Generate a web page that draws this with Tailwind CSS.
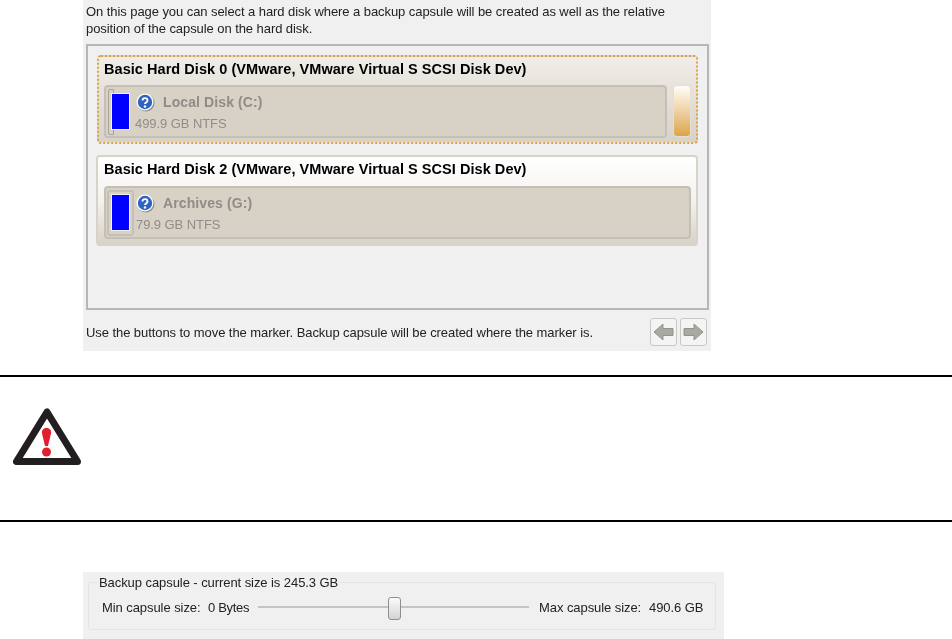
<!DOCTYPE html>
<html lang="en">
<head>
    <meta charset="UTF-8">
    <title>Backup capsule</title>
    <script src="https://cdn.jsdelivr.net/npm/@tailwindcss/browser@4"></script>
</head>
<body class="bg-white w-[952px] h-[639px] overflow-hidden font-['Liberation_Sans',sans-serif]">

    <!-- Disk selection screenshot -->
    <section class="ml-[83px] w-[628px] h-[351px] bg-[#f0f0f0] pl-[3px] pr-[2px] blur-[0.5px] text-[#222] text-[13px] tracking-[-0.07px]">
        <p class="h-[44px] pt-[3px] leading-[17px]">On this page you can select a hard disk where a backup capsule will be created as well as the relative<br>position of the capsule on the hard disk.</p>

        <div class="h-[266px] border-2 border-[#b4b6bc] pl-[9px] pr-[9px] pt-[9px]">
            <!-- Disk 0, selected -->
            <div class="h-[89px] w-[601px] rounded-[4px] border-2 border-dotted border-[#d9a34a] bg-gradient-to-b from-[#f0ede8] to-[#d8d2c7] pt-[4px] pl-[5px] pr-[5px]">
                <h3 class="h-[24px] font-bold text-[14.5px] leading-[16px] text-black tracking-[0.05px]">Basic Hard Disk 0 (VMware, VMware Virtual S SCSI Disk Dev)</h3>
                <div class="flex gap-[6px]">
                    <div class="relative w-[563px] h-[53px] rounded-[4px] border-2 border-[#c4c0b7] bg-[#d7d1c6] flex items-center pl-[5px]">
                        <div class="absolute left-[2px] top-[2px] w-[6px] h-[46px] border border-[#a8a49b] rounded-l-[2px]"></div>
                        <div class="relative w-[19px] h-[37px] bg-[#0000ff] border border-[#f0f0f0]"></div>
                        <div class="ml-[6px]">
                            <div class="flex items-center gap-[8px] h-[22px]">
                                <svg class="w-[19px] h-[19px]" viewBox="0 0 19 19">
                                    <circle cx="10" cy="10" r="8.500" fill="#8d8a84"/>
                                    <circle cx="9" cy="9" r="8.500" fill="#fff"/>
                                    <circle cx="9" cy="9" r="7.200" fill="#2f63c0"/>
                                    <path d="M6.500 7.500c0-3.200 5-3.200 5 0 0 2-2.500 2-2.500 3.500" fill="none" stroke="#fff" stroke-width="1.900"/>
                                    <circle cx="9" cy="13.500" r="1.200" fill="#fff"/>
                                </svg>
                                <span class="text-[14px] font-bold text-[#8f8d88] tracking-[0.1px]">Local Disk (C:)</span>
                            </div>
                            <div class="text-[13px] leading-[16px] text-[#908e8a] -ml-[1px] mt-[2px]">499.9 GB NTFS</div>
                        </div>
                    </div>
                    <div class="w-[18px] h-[52px] rounded-[4px] bg-gradient-to-b from-[#fffdf8] to-[#dca445] border border-[#e4dfd4]"></div>
                </div>
            </div>

            <!-- Disk 2 -->
            <div class="mt-[11px] -ml-px h-[91px] w-[602px] rounded-[4px] border-2 border-[#d8d3c9] bg-gradient-to-b from-white via-[#f4f2ee] to-[#d8d2c7] pt-[4px] pl-[6px] pr-[5px]">
                <h3 class="h-[25px] font-bold text-[14.5px] leading-[16px] text-black tracking-[0.05px]">Basic Hard Disk 2 (VMware, VMware Virtual S SCSI Disk Dev)</h3>
                <div class="relative w-[587px] h-[53px] rounded-[4px] border-2 border-[#c4c0b7] bg-[#d7d1c6] flex items-center pl-[5px]">
                    <div class="absolute left-[1px] top-[2px] w-[27px] h-[46px] border-2 border-[#c4c0b7] rounded-[3px]"></div>
                    <div class="relative w-[19px] h-[37px] bg-[#0000ff] border border-[#f0f0f0]"></div>
                    <div class="ml-[6px]">
                        <div class="flex items-center gap-[8px] h-[22px]">
                            <svg class="w-[19px] h-[19px]" viewBox="0 0 19 19">
                                <circle cx="10" cy="10" r="8.500" fill="#8d8a84"/>
                                <circle cx="9" cy="9" r="8.500" fill="#fff"/>
                                <circle cx="9" cy="9" r="7.200" fill="#2f63c0"/>
                                <path d="M6.500 7.500c0-3.200 5-3.200 5 0 0 2-2.500 2-2.500 3.500" fill="none" stroke="#fff" stroke-width="1.900"/>
                                <circle cx="9" cy="13.500" r="1.200" fill="#fff"/>
                            </svg>
                            <span class="text-[14px] font-bold text-[#8f8d88] tracking-[0.1px]">Archives (G:)</span>
                        </div>
                        <div class="text-[13px] leading-[16px] text-[#908e8a] mt-[2px]">79.9 GB NTFS</div>
                    </div>
                </div>
            </div>
        </div>

        <div class="flex items-start justify-between pr-[2px] h-[41px] pt-[8px]">
            <span class="mt-[7px] leading-[16px]">Use the buttons to move the marker. Backup capsule will be created where the marker is.</span>
            <div class="flex gap-[3px]">
                <div class="w-[27px] h-[28px] rounded-[3px] border border-[#c8c8c8] bg-[#f4f4f4] flex items-center justify-center">
                    <svg class="w-[21px] h-[18px]" viewBox="0 0 21 18"><path d="M1 9 10 1v4.500h10v7H10V17z" fill="#a9a9a2" stroke="#93938c"/></svg>
                </div>
                <div class="w-[27px] h-[28px] rounded-[3px] border border-[#c8c8c8] bg-[#f4f4f4] flex items-center justify-center">
                    <svg class="w-[21px] h-[18px]" viewBox="0 0 21 18"><path d="M20 9 11 1v4.500H1v7h10V17z" fill="#a9a9a2" stroke="#93938c"/></svg>
                </div>
            </div>
        </div>
    </section>

    <!-- Warning note -->
    <div class="mt-[24px] h-[147px] border-y-2 border-black flex items-start pl-[13px] pt-[31px]">
        <svg class="w-[68px] h-[58px]" viewBox="0 0 68 58">
            <path d="M34 4 3.500 53.500h61z" fill="#fff" stroke="#231f20" stroke-width="7" stroke-linejoin="round"/>
            <path d="M33.500 20c-3.500 0-5 2.500-4.500 5.500L32 38h3l3-12.500c.5-3-1-5.500-4.500-5.500z" fill="#e02030"/>
            <circle cx="33.500" cy="44" r="4.500" fill="#e02030"/>
        </svg>
    </div>

    <!-- Capsule size slider -->
    <section class="mt-[50px] ml-[83px] w-[641px] h-[67px] bg-[#f0f0f0] pl-[5px] pt-[10px] blur-[0.5px] text-[#222] text-[13px] tracking-[-0.07px]">
        <div class="relative w-[628px] h-[48px] rounded-[3px] border border-[#dfe5ea] pl-[13px] flex items-center">
            <span class="absolute left-[10px] -top-[8px] bg-[#f0f0f0] pr-[2px] leading-[15px]">Backup capsule - current size is 245.3 GB</span>
            <div class="flex items-center mt-[3px]">
                <span class="w-[106px] shrink-0 whitespace-nowrap">Min capsule size:</span>
                <span class="w-[50px] shrink-0 whitespace-nowrap tracking-[-0.3px]">0 Bytes</span>
                <div class="relative w-[271px] h-[2px] -mt-[2px] bg-[#c4c4c4] shrink-0">
                    <div class="absolute left-[130px] -top-[9px] w-[13px] h-[23px] rounded-[3px] border border-[#8e8e8e] bg-gradient-to-b from-[#fafafa] to-[#d4d4d4]"></div>
                </div>
                <span class="ml-[10px] w-[110px] shrink-0 whitespace-nowrap">Max capsule size:</span>
                <span class="whitespace-nowrap">490.6 GB</span>
            </div>
        </div>
    </section>
</body>
</html>
